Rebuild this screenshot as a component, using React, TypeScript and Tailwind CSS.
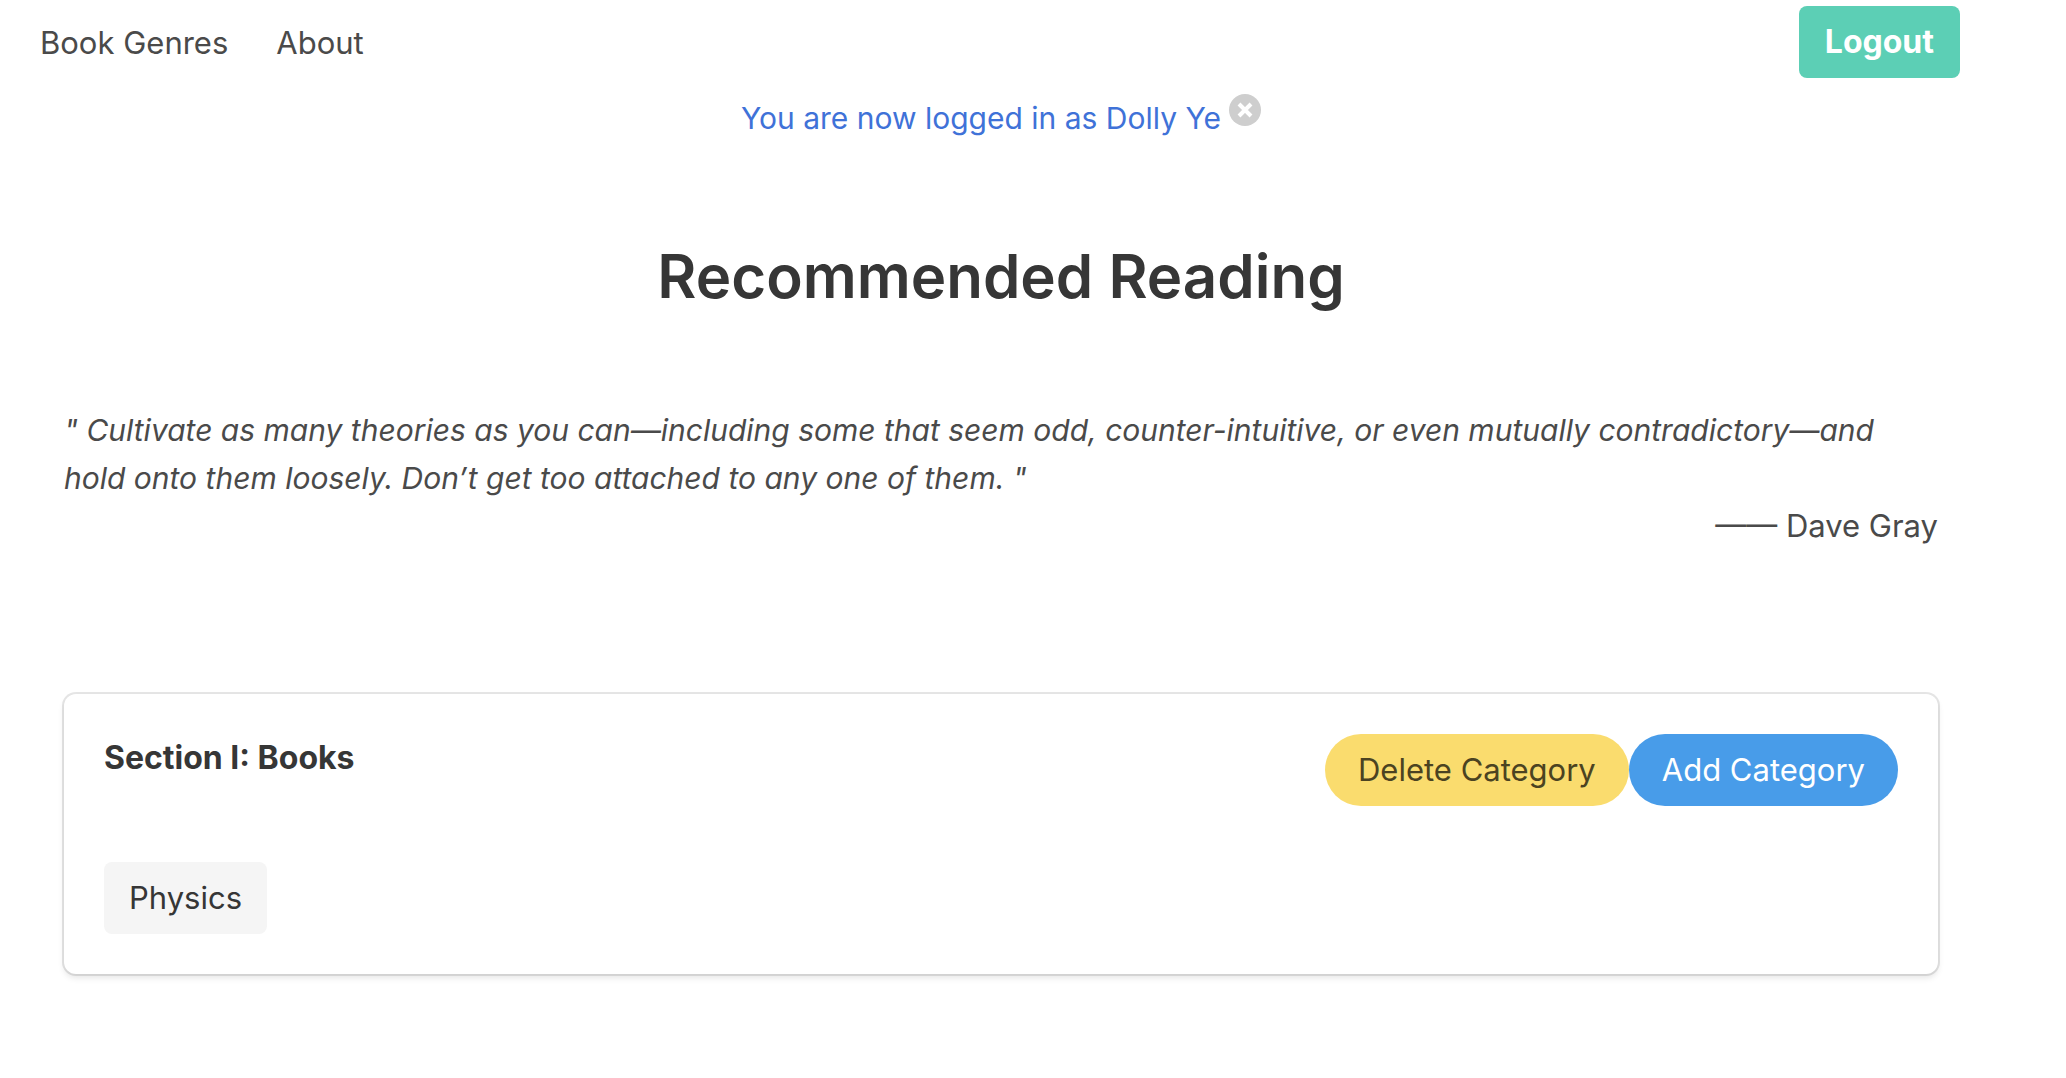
const categories = ['Physics'];

function Navbar() {
  return (
    <nav className="mr-[106px] flex items-center justify-between pt-1.5 pl-10">
      <div className="flex gap-12 pt-px">
        <a href="#genres">Book Genres</a>
        <a href="#about">About</a>
      </div>
      <button type="button" className="h-18 rounded-lg bg-[#5ccfb5] px-6.5 text-[32px] font-bold text-white">
        Logout
      </button>
    </nav>
  );
}

function Notification() {
  return (
    <div className="mt-4 flex justify-center gap-2 text-[30px] text-[#3f72d8]">
      <p>You are now logged in as Dolly Ye</p>
      <button
        type="button"
        aria-label="Dismiss"
        className="flex size-8 items-center justify-center rounded-full bg-[#cecece] text-white"
      >
        <svg viewBox="0 0 16 16" className="size-4" stroke="currentColor" strokeWidth="4" aria-hidden="true">
          <path d="M2 2l12 12M14 2l-12 12" />
        </svg>
      </button>
    </div>
  );
}

export default function App() {
  return (
    <div className="min-h-screen bg-white font-['Inter',sans-serif] text-[31px] leading-[48px] text-[#4a4a4a]">
      <Navbar />
      <main className="mr-32 ml-16">
        <Notification />
        <h1 className="mt-[98px] text-center text-[60px] leading-[72px] font-semibold text-[#363636]">
          Recommended Reading
        </h1>
        <blockquote className="mt-[94px]">
          <p className="text-[30px] italic">
            " Cultivate as many theories as you can—including some that seem odd, counter-intuitive, or even mutually
            contradictory—and hold onto them loosely. Don’t get too attached to any one of them. "
          </p>
          <footer className="text-right">—— Dave Gray</footer>
        </blockquote>
        <section className="mt-36 rounded-xl bg-white p-10 shadow-[0_4px_6px_rgba(10,10,10,0.1),0_0_0_2px_rgba(10,10,10,0.1)]">
          <div className="flex items-start justify-between">
            <h2 className="text-[32px] font-bold text-[#363636]">Section I: Books</h2>
            <div className="flex">
              <button type="button" className="h-18 rounded-full bg-[#fadc6e] px-[33px] text-[#4b4321]">
                Delete Category
              </button>
              <button type="button" className="h-18 rounded-full bg-[#489ce9] px-[33px] text-white">
                Add Category
              </button>
            </div>
          </div>
          <div className="mt-14 flex gap-4">
            {categories.map((name) => (
              <button key={name} type="button" className="h-18 rounded-lg bg-[#f5f5f5] px-[25px] text-[#363636]">
                {name}
              </button>
            ))}
          </div>
        </section>
      </main>
    </div>
  );
}
